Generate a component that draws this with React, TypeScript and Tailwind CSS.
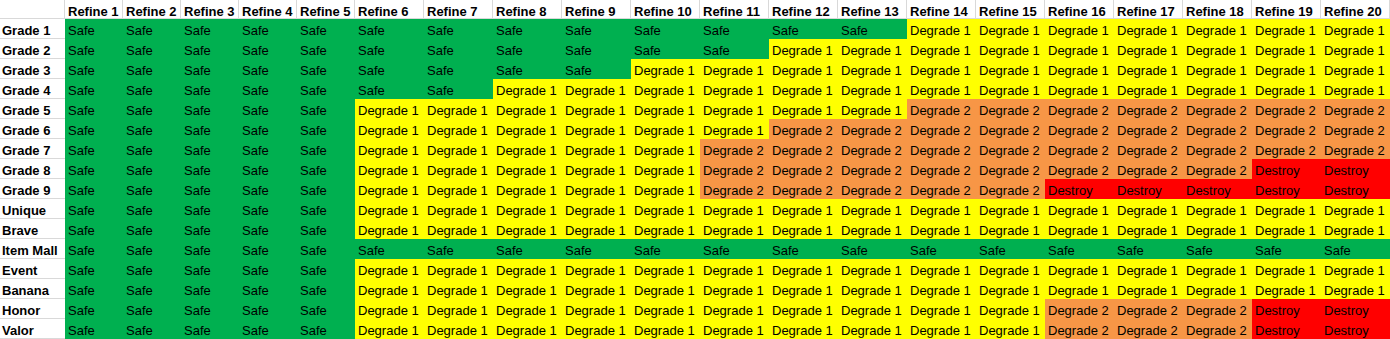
const cols = Array.from({ length: 20 }, (_, i) => `Refine ${i + 1}`);

type Level = 'S' | 'D1' | 'D2' | 'X';

// [label, last safe, last degrade 1, last degrade 2] - the rest is Destroy
const rows: [string, number, number, number][] = [
  ['Grade 1', 13, 20, 20],
  ['Grade 2', 11, 20, 20],
  ['Grade 3', 9, 20, 20],
  ['Grade 4', 7, 20, 20],
  ['Grade 5', 5, 13, 20],
  ['Grade 6', 5, 11, 20],
  ['Grade 7', 5, 10, 20],
  ['Grade 8', 5, 10, 18],
  ['Grade 9', 5, 10, 15],
  ['Unique', 5, 20, 20],
  ['Brave', 5, 20, 20],
  ['Item Mall', 20, 20, 20],
  ['Event', 5, 20, 20],
  ['Banana', 5, 20, 20],
  ['Honor', 5, 15, 18],
  ['Valor', 5, 15, 18],
];

const styles: Record<Level, { text: string; cls: string }> = {
  S: { text: 'Safe', cls: 'bg-[#00b050]' },
  D1: { text: 'Degrade 1', cls: 'bg-[#ffff00]' },
  D2: { text: 'Degrade 2', cls: 'bg-[#f79646]' },
  X: { text: 'Destroy', cls: 'bg-[#ff0000]' },
};

function levelFor(n: number, safe: number, d1: number, d2: number): Level {
  if (n <= safe) return 'S';
  if (n <= d1) return 'D1';
  if (n <= d2) return 'D2';
  return 'X';
}

export default function App() {
  return (
    <div className="w-[1390px] h-[339px] bg-white overflow-hidden font-['Liberation_Sans',Arial,sans-serif] text-[13px] text-black">
      <div className="grid grid-cols-[65px_repeat(5,58px)_repeat(15,69px)] grid-rows-[19px_repeat(16,20px)]">
        {/* header row */}
        <div className="border-r border-b border-[#d9d9d9]" />
        {cols.map((c) => (
          <div
            key={c}
            className="border-r border-b border-[#d9d9d9] pl-[3px] font-bold leading-[23px] whitespace-nowrap overflow-hidden"
          >
            {c}
          </div>
        ))}

        {rows.map(([label, safe, d1, d2]) => (
          <div key={label} className="contents">
            <div className="border-b border-[#d9d9d9] pl-[2px] font-bold leading-[23px] whitespace-nowrap overflow-hidden">
              {label}
            </div>
            {cols.map((c, i) => {
              const s = styles[levelFor(i + 1, safe, d1, d2)];
              return (
                <div key={c} className={`${s.cls} pl-[3px] leading-[24px] whitespace-nowrap overflow-hidden`}>
                  {s.text}
                </div>
              );
            })}
          </div>
        ))}
      </div>
    </div>
  );
}
